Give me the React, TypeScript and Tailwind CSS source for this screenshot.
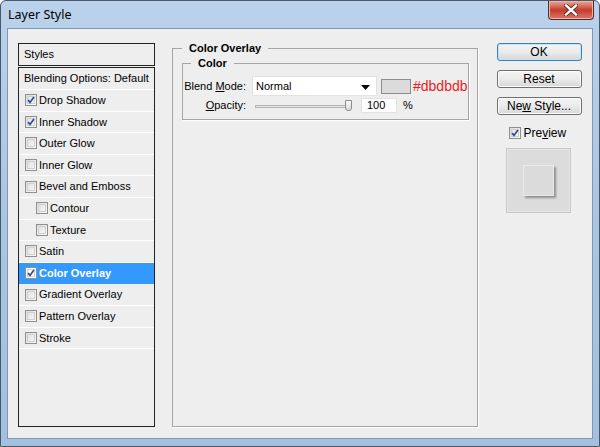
import React from "react";

const font = { fontFamily: '"Liberation Sans", Arial, sans-serif' };

function Check({ checked, light }: { checked?: boolean; light?: boolean }) {
  return (
    <span
      className={`relative inline-flex h-[12px] w-[12px] shrink-0 items-center justify-center border border-[#8e8f8f] ${
        light ? "bg-white" : "bg-gradient-to-br from-[#dcdcdc] to-[#fbfbfb]"
      }`}
    >
      <span className="absolute inset-[1px] border border-[#d0d0d0]" />
      {checked && (
        <svg width="8" height="8" viewBox="0 0 9 9" className="relative">
          <path d="M1.2 4.6 L3.4 7.2 L7.8 1.2" fill="none" stroke="#2e4f8f" strokeWidth="1.9" />
        </svg>
      )}
    </span>
  );
}

const items: { label: string; checked?: boolean; indent?: boolean; selected?: boolean }[] = [
  { label: "Drop Shadow", checked: true },
  { label: "Inner Shadow", checked: true },
  { label: "Outer Glow" },
  { label: "Inner Glow" },
  { label: "Bevel and Emboss" },
  { label: "Contour", indent: true },
  { label: "Texture", indent: true },
  { label: "Satin" },
  { label: "Color Overlay", checked: true, selected: true },
  { label: "Gradient Overlay" },
  { label: "Pattern Overlay" },
  { label: "Stroke" },
];

function Button({ children, primary }: { children: React.ReactNode; primary?: boolean }) {
  return (
    <div
      className={`flex h-[18px] w-[85px] items-center justify-center rounded-[3px] border text-[12px] text-black bg-gradient-to-b from-[#f4f4f4] via-[#ebebeb] to-[#d6d6d6] ${
        primary ? "border-[#3c7fb1] shadow-[inset_0_0_0_1px_#bfe6fb]" : "border-[#707070] shadow-[inset_0_0_0_1px_#fcfcfc]"
      }`}
    >
      {children}
    </div>
  );
}

export default function App() {
  return (
    <div
      className="flex h-[447px] w-[600px] flex-col overflow-hidden rounded-t-[6px] border border-[#4a5766] bg-gradient-to-b from-[#bad2eb] via-[#a9c5e4] to-[#a3c0e0]"
      style={font}
    >
      {/* caption */}
      <div className="flex h-[27px] shrink-0 items-start justify-between">
        <div
          className="pl-[7px] pt-[5px] text-[12.5px] text-black"
          style={{ fontFamily: '"Noto Sans", "Liberation Sans", sans-serif' }}
        >
          Layer Style
        </div>
        <div className="mr-[5px] flex h-[19px] w-[46px] items-center justify-center rounded-b-[4px] border border-t-0 border-[#5a2a24] bg-gradient-to-b from-[#e9a99b] via-[#c53a2a] to-[#d9776a] shadow-[inset_0_0_0_1px_#eeb3a8]">
          <svg width="14" height="12" viewBox="0 0 14 12">
            <path d="M2 1.5 L12 10.5 M12 1.5 L2 10.5" stroke="#4a2320" strokeWidth="4" strokeLinecap="square" />
            <path d="M2 1.5 L12 10.5 M12 1.5 L2 10.5" stroke="#ffffff" strokeWidth="2.4" strokeLinecap="square" />
          </svg>
        </div>
      </div>

      {/* client area */}
      <div className="mx-[6px] mb-[8px] flex flex-1 border border-[#8198b0] bg-[#eeeeee] pl-[10px] pt-[14px] pb-[11px] text-[11px] text-black">
        {/* style list */}
        <div className="flex w-[137px] flex-col gap-[1px]">
          <div className="flex h-[23px] items-center border border-[#222] bg-[#eeeeee] pl-[5px]">Styles</div>
          <div className="flex flex-1 flex-col border border-[#222] bg-[#eeeeee]">
            <div className="flex h-[22px] items-center border-b border-white pl-[5px]">Blending Options: Default</div>
            {items.map((it) => (
              <div
                key={it.label}
                className={`flex h-[21.6px] items-center gap-[2px] border-b ${
                  it.selected ? "border-[#3399ff] bg-[#3399ff] font-bold text-white" : "border-white"
                } ${it.indent ? "pl-[17px]" : "pl-[6px]"}`}
              >
                <Check checked={it.checked} light={it.selected} />
                <span>{it.label}</span>
              </div>
            ))}
          </div>
        </div>

        {/* settings */}
        <fieldset className="ml-[17px] mt-[-1px] h-[385px] w-[305px] border border-[#a5a5a5] shadow-[1px_1px_0_#ffffff]">
          <legend className="ml-[9px] px-[7px] text-[11px] font-bold leading-[13px]">Color Overlay</legend>
          <fieldset className="ml-[9px] mr-[8px] mt-[2px] h-[63px] border border-[#a5a5a5] shadow-[1px_1px_0_#ffffff]">
            <legend className="ml-[8px] px-[7px] text-[11px] font-bold leading-[13px]">Color</legend>
            <div className="mt-[6px] flex h-[20px] items-center">
              <div className="w-[63px] text-right">
                Blend <span className="underline">M</span>ode:
              </div>
              <div className="relative ml-[6px] flex h-[20px] w-[125px] items-center border border-[#e2e2e2] bg-white pl-[3px]">
                Normal
                <svg width="9" height="5" viewBox="0 0 9 5" className="absolute right-[6px] top-[8px]">
                  <path d="M0 0 H9 L4.5 5 Z" fill="#000" />
                </svg>
              </div>
              <div className="ml-[4px] h-[15px] w-[30px] border border-[#8e8e8e] bg-[#dbdbdb]" />
              <div className="ml-[2px] text-[14px] leading-[14px] text-[#ee1c1c]">#dbdbdb</div>
            </div>
            <div className="mt-[2px] flex h-[15px] items-center">
              <div className="w-[63px] text-right">
                <span className="underline">O</span>pacity:
              </div>
              <div className="relative ml-[9px] h-[15px] w-[101px]">
                <div className="absolute left-0 right-[4px] top-[7px] h-[3px] border border-[#b5b5b5] bg-[#e6e6e6]" />
                <div className="absolute right-[4px] top-[2px] h-[11px] w-[7px] rounded-b-[3px] border border-[#8c8c8c] bg-gradient-to-b from-[#fafafa] to-[#dadada]" />
              </div>
              <div className="ml-[5px] flex h-[15px] w-[36px] items-center border border-[#e2e2e2] bg-white pl-[5px]">100</div>
              <div className="ml-[6px]">%</div>
            </div>
          </fieldset>
        </fieldset>

        {/* buttons */}
        <div className="ml-[19px] flex flex-col">
          <div className="flex flex-col gap-[9px]">
            <Button primary>OK</Button>
            <Button>Reset</Button>
            <Button>
              <span>
                Ne<span className="underline">w</span> Style...
              </span>
            </Button>
          </div>
          <div className="ml-[12px] mt-[9px] flex items-center gap-[3px] text-[12px]">
            <Check checked />
            <span>
              Pre<span className="underline">v</span>iew
            </span>
          </div>
          <div className="ml-[9px] mt-[6px] flex h-[65px] w-[65px] items-center justify-center border border-[#c8c8c8] bg-[#dcdcdc] shadow-[inset_0_0_0_1px_#e6e6e6]">
            <div className="h-[31px] w-[31px] border border-[#eaeaea] bg-[#dbdbdb] shadow-[2px_2px_2px_rgba(0,0,0,0.35)]" />
          </div>
        </div>
      </div>
    </div>
  );
}
